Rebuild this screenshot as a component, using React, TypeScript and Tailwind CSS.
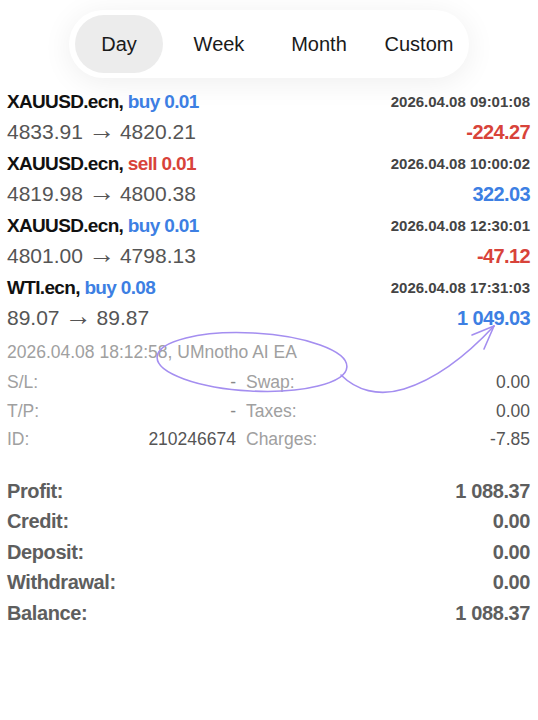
import React from 'react';

type Trade = {
    symbol: string;
    side: 'buy' | 'sell';
    volume: string;
    time: string;
    open: string;
    close: string;
    profit: string;
};

const trades: Trade[] = [
    { symbol: 'XAUUSD.ecn', side: 'buy', volume: '0.01', time: '2026.04.08 09:01:08', open: '4833.91', close: '4820.21', profit: '-224.27' },
    { symbol: 'XAUUSD.ecn', side: 'sell', volume: '0.01', time: '2026.04.08 10:00:02', open: '4819.98', close: '4800.38', profit: '322.03' },
    { symbol: 'XAUUSD.ecn', side: 'buy', volume: '0.01', time: '2026.04.08 12:30:01', open: '4801.00', close: '4798.13', profit: '-47.12' },
    { symbol: 'WTI.ecn', side: 'buy', volume: '0.08', time: '2026.04.08 17:31:03', open: '89.07', close: '89.87', profit: '1 049.03' },
];

const summary = [
    { label: 'Profit:', value: '1 088.37' },
    { label: 'Credit:', value: '0.00' },
    { label: 'Deposit:', value: '0.00' },
    { label: 'Withdrawal:', value: '0.00' },
    { label: 'Balance:', value: '1 088.37' },
];

const periods = ['Day', 'Week', 'Month', 'Custom'];

function TradeRow({ trade }: { trade: Trade }) {
    const sideColor = trade.side === 'buy' ? 'text-[#3d7fe3]' : 'text-[#d8433a]';
    const profitColor = trade.profit.startsWith('-') ? 'text-[#d8433a]' : 'text-[#3d7fe3]';
    return (
        <div>
            <div className="flex h-[29px] items-center justify-between">
                <span className="text-[19px] font-bold tracking-[-0.035em] text-[#111]">
                    {trade.symbol}, <span className={sideColor}>{trade.side} {trade.volume}</span>
                </span>
                <span className="text-[15px] font-bold text-[#444]">{trade.time}</span>
            </div>
            <div className="flex h-[33px] items-center justify-between pb-[4px]">
                <span className="flex items-center text-[21px] text-[#555]">
                    {trade.open}
                    <span className="mx-[5px] -mt-[3px] text-[27px] leading-none">→</span>
                    {trade.close}
                </span>
                <span className={`text-[20px] font-bold tracking-[-0.03em] ${profitColor}`}>{trade.profit}</span>
            </div>
        </div>
    );
}

export default function App() {
    return (
        <div className="relative min-h-screen w-full overflow-hidden bg-white font-['Liberation_Sans',Arial,sans-serif]">
            {/* Period switch */}
            <div className="flex justify-center pt-[10px]">
                <div className="grid h-[68px] w-[400px] grid-cols-4 rounded-full bg-white shadow-[0_4px_30px_rgba(0,0,0,0.07)]">
                    {periods.map((p, i) => (
                        <div key={p} className="px-[6px] py-[5px]">
                            <div
                                className={`flex h-full items-center justify-center rounded-full text-[20px] text-[#1a1a1a] ${
                                    i === 0 ? 'bg-[#ececec]' : ''
                                }`}
                            >
                                {p}
                            </div>
                        </div>
                    ))}
                </div>
            </div>

            {/* Deals */}
            <div className="mt-[10px] pl-[7px] pr-[8px]">
                {trades.map((t, i) => (
                    <TradeRow key={i} trade={t} />
                ))}

                <div className="flex h-[32px] items-center text-[17.5px] text-[#a0a0a0]">
                    2026.04.08 18:12:58, UMnotho AI EA
                </div>

                <div className="grid grid-cols-[229px_1fr] gap-x-[10px] text-[17.5px]">
                    <div className="flex h-[28.5px] items-center justify-between">
                        <span className="text-[#a0a0a0]">S/L:</span>
                        <span className="text-[#888]">-</span>
                    </div>
                    <div className="flex h-[28.5px] items-center justify-between">
                        <span className="text-[#a0a0a0]">Swap:</span>
                        <span className="text-[#555]">0.00</span>
                    </div>
                    <div className="flex h-[28.5px] items-center justify-between">
                        <span className="text-[#a0a0a0]">T/P:</span>
                        <span className="text-[#888]">-</span>
                    </div>
                    <div className="flex h-[28.5px] items-center justify-between">
                        <span className="text-[#a0a0a0]">Taxes:</span>
                        <span className="text-[#555]">0.00</span>
                    </div>
                    <div className="flex h-[28.5px] items-center justify-between">
                        <span className="text-[#a0a0a0]">ID:</span>
                        <span className="text-[#555]">210246674</span>
                    </div>
                    <div className="flex h-[28.5px] items-center justify-between">
                        <span className="text-[#a0a0a0]">Charges:</span>
                        <span className="text-[#555]">-7.85</span>
                    </div>
                </div>

                {/* Totals */}
                <div className="mt-[22px]">
                    {summary.map((s) => (
                        <div key={s.label} className="flex h-[30.5px] items-center justify-between text-[20px] font-bold tracking-[-0.02em] text-[#5e5e5e]">
                            <span>{s.label}</span>
                            <span>{s.value}</span>
                        </div>
                    ))}
                </div>
            </div>

            {/* Hand-drawn annotation */}
            <svg
                className="pointer-events-none absolute left-0 top-0"
                width="538"
                height="720"
                viewBox="0 0 538 720"
                fill="none"
                stroke="#a48ef0"
                strokeWidth="1.6"
                strokeLinecap="round"
            >
                <ellipse cx="252" cy="362" rx="95" ry="29" transform="rotate(3 252 362)" />
                <path d="M341 375 C 356 390, 378 397, 404 389 C 436 379, 468 354, 494 326" />
                <path d="M494 326 L472 335" />
                <path d="M494 326 L484 349" />
            </svg>
        </div>
    );
}
